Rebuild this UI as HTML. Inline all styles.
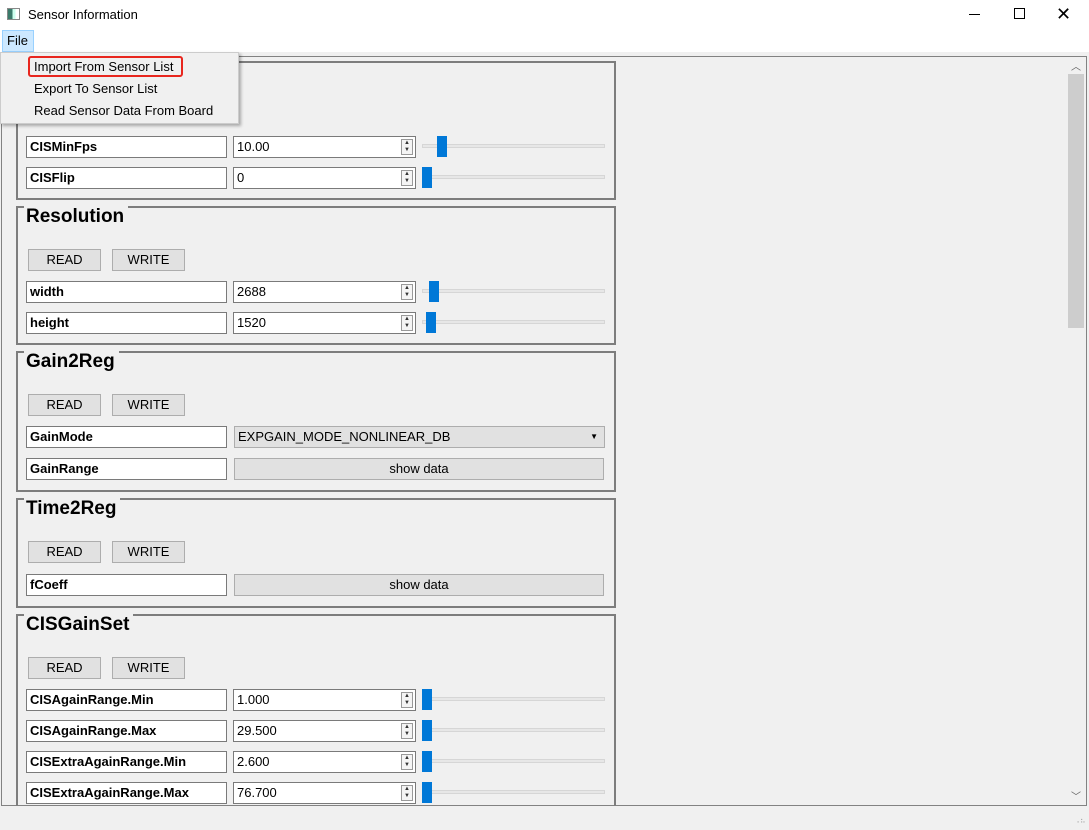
<!DOCTYPE html>
<html><head><meta charset="utf-8"><style>
*{box-sizing:border-box;margin:0;padding:0}
body{width:1089px;height:830px;background:#f0f0f0;font-family:"Liberation Sans",Arial,sans-serif;position:relative;overflow:hidden;font-size:12px;color:#000}
.a{position:absolute}
.grp{position:absolute;left:16px;width:600px;border:2px solid #7d7d7d}
.ttl{position:absolute;left:6px;top:-2px;background:#f0f0f0;font-weight:bold;font-size:19px;padding:0 4px 0 2px;line-height:22px}
.lbl{position:absolute;left:26px;width:201px;height:22px;background:#fff;border:1px solid #7a7a7a;font-weight:bold;font-size:13px;line-height:20px;padding-left:3px}
.spin{position:absolute;left:233px;width:183px;height:22px;background:#fff;border:1px solid #7a7a7a;font-size:13px;line-height:20px;padding-left:3px}
.spin i{position:absolute;right:2px;top:2px;width:12px;height:16px;border:1px solid #999;background:#f4f4f4;font-style:normal;font-size:6px;line-height:7px;text-align:center;color:#333}
.trk{position:absolute;left:422px;width:183px;height:4px;background:#e7e7e7;border:1px solid #d6d6d6}
.hdl{position:absolute;width:10px;height:21px;background:#0078d7}
.btn{position:absolute;height:22px;background:#e1e1e1;border:1px solid #adadad;font-size:13px;line-height:20px;text-align:center}
</style></head><body>
<div class="a" style="left:0;top:0;width:1089px;height:52px;background:#fff"></div>
<div class="a" style="left:7px;top:8px;width:13px;height:12px;border:1px solid #888;background:linear-gradient(90deg,#3a7a6a 0 40%,#cfe 40% 70%,#fff 70%)"></div>
<div class="a" style="left:28px;top:7px;font-size:13px">Sensor Information</div>
<div class="a" style="left:969px;top:14px;width:11px;height:1px;background:#000"></div>
<div class="a" style="left:1014px;top:8px;width:11px;height:11px;border:1px solid #000"></div>
<div class="a" style="left:1056px;top:2px;font-size:18px;line-height:24px">✕</div>
<div class="a" style="left:2px;top:30px;width:32px;height:22px;background:#cce8ff;border:1px solid #99d1ff;font-size:13px;line-height:20px;padding-left:4px">File</div>
<div class="a" style="left:1px;top:56px;width:1086px;height:750px;border:1px solid #828282"></div>
<div class="a" style="left:1068px;top:57px;width:17px;height:748px;background:#f0f0f0"></div>
<div class="a" style="left:1068px;top:74px;width:16px;height:254px;background:#cdcdcd"></div>
<div class="a" style="left:1071px;top:58px;font-size:10px;color:#606060">︿</div>
<div class="a" style="left:1071px;top:788px;font-size:10px;color:#606060">﹀</div>

<div class="grp" style="top:61px;height:139px"></div>
<div class="lbl" style="top:136px">CISMinFps</div><div class="spin" style="top:136px">10.00<i>▲<br>▼</i></div><div class="trk" style="top:144px"></div><div class="hdl" style="left:437px;top:136px"></div>
<div class="lbl" style="top:167px">CISFlip</div><div class="spin" style="top:167px">0<i>▲<br>▼</i></div><div class="trk" style="top:175px"></div><div class="hdl" style="left:422px;top:167px"></div>

<div class="grp" style="top:206px;height:139px"><div class="ttl">Resolution</div></div>
<div class="btn" style="left:28px;top:249px;width:73px">READ</div><div class="btn" style="left:112px;top:249px;width:73px">WRITE</div>
<div class="lbl" style="top:281px">width</div><div class="spin" style="top:281px">2688<i>▲<br>▼</i></div><div class="trk" style="top:289px"></div><div class="hdl" style="left:429px;top:281px"></div>
<div class="lbl" style="top:312px">height</div><div class="spin" style="top:312px">1520<i>▲<br>▼</i></div><div class="trk" style="top:320px"></div><div class="hdl" style="left:426px;top:312px"></div>

<div class="grp" style="top:351px;height:141px"><div class="ttl">Gain2Reg</div></div>
<div class="btn" style="left:28px;top:394px;width:73px">READ</div><div class="btn" style="left:112px;top:394px;width:73px">WRITE</div>
<div class="lbl" style="top:426px">GainMode</div>
<div class="btn" style="left:234px;top:426px;width:371px;text-align:left;padding-left:3px">EXPGAIN_MODE_NONLINEAR_DB<span style="position:absolute;right:6px;font-size:8px">▼</span></div>
<div class="lbl" style="top:458px">GainRange</div><div class="btn" style="left:234px;top:458px;width:370px">show data</div>

<div class="grp" style="top:498px;height:110px"><div class="ttl">Time2Reg</div></div>
<div class="btn" style="left:28px;top:541px;width:73px">READ</div><div class="btn" style="left:112px;top:541px;width:73px">WRITE</div>
<div class="lbl" style="top:574px">fCoeff</div><div class="btn" style="left:234px;top:574px;width:370px">show data</div>

<div class="grp" style="top:614px;height:192px;border-bottom:none"><div class="ttl">CISGainSet</div></div>
<div class="btn" style="left:28px;top:657px;width:73px">READ</div><div class="btn" style="left:112px;top:657px;width:73px">WRITE</div>
<div class="lbl" style="top:689px">CISAgainRange.Min</div><div class="spin" style="top:689px">1.000<i>▲<br>▼</i></div><div class="trk" style="top:697px"></div><div class="hdl" style="left:422px;top:689px"></div>
<div class="lbl" style="top:720px">CISAgainRange.Max</div><div class="spin" style="top:720px">29.500<i>▲<br>▼</i></div><div class="trk" style="top:728px"></div><div class="hdl" style="left:422px;top:720px"></div>
<div class="lbl" style="top:751px">CISExtraAgainRange.Min</div><div class="spin" style="top:751px">2.600<i>▲<br>▼</i></div><div class="trk" style="top:759px"></div><div class="hdl" style="left:422px;top:751px"></div>
<div class="lbl" style="top:782px">CISExtraAgainRange.Max</div><div class="spin" style="top:782px">76.700<i>▲<br>▼</i></div><div class="trk" style="top:790px"></div><div class="hdl" style="left:422px;top:782px"></div>
<div class="a" style="left:2px;top:806px;width:1085px;height:24px;background:#f0f0f0"></div>
<div class="a" style="left:1074px;top:816px;font-size:8px;color:#aaa">⠠⠦</div>

<div class="a" style="left:0;top:52px;width:239px;height:72px;background:#f0f0f0;border:1px solid #ccc;box-shadow:2px 2px 3px rgba(0,0,0,.3)"></div>
<div class="a" style="left:28px;top:56px;width:155px;height:21px;border:2px solid #e8261e;border-radius:3px"></div>
<div class="a" style="left:34px;top:59px;font-size:13px">Import From Sensor List</div>
<div class="a" style="left:34px;top:81px;font-size:13px">Export To Sensor List</div>
<div class="a" style="left:34px;top:103px;font-size:13px">Read Sensor Data From Board</div>
</body></html>
